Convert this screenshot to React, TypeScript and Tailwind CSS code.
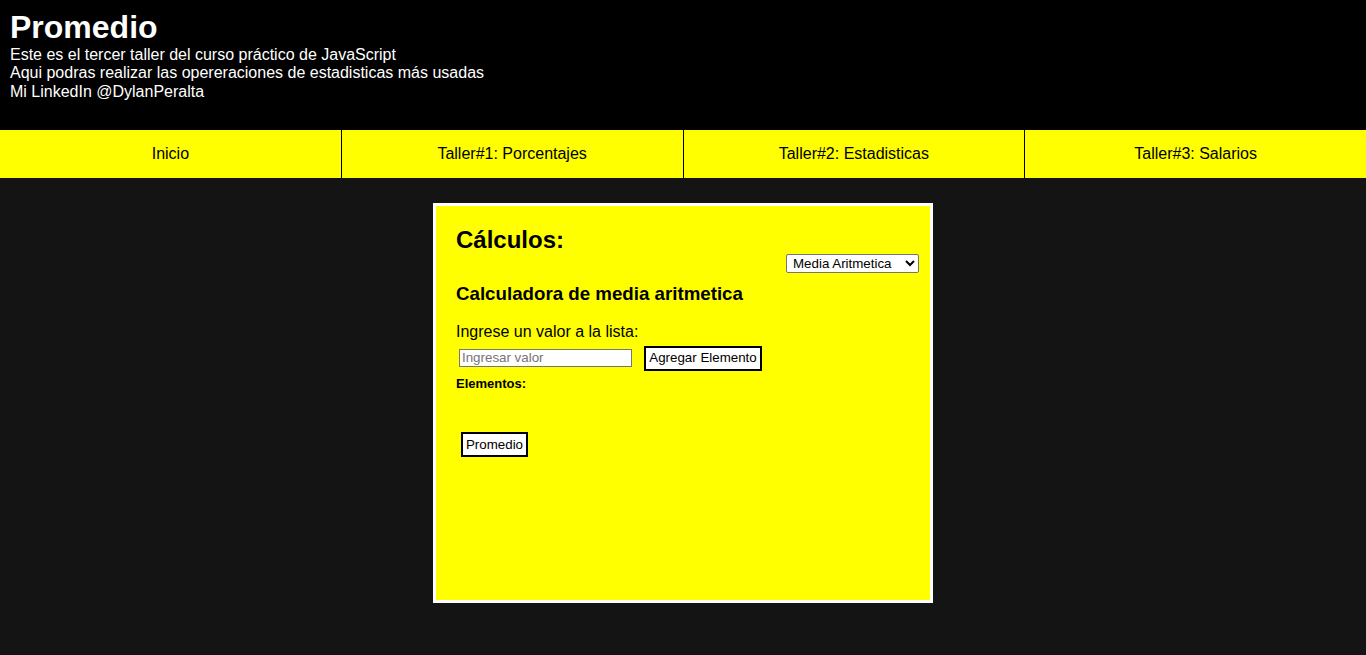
import React from "react";

const links = ["Inicio", "Taller#1: Porcentajes", "Taller#2: Estadisticas", "Taller#3: Salarios"];

export default function App() {
  return (
    <div className="min-h-screen bg-[#141414] font-['Liberation_Sans',Arial,sans-serif]">
      <header className="h-[130px] bg-black px-[10px] pt-[9px] text-white">
        <h1 className="text-[32px] font-bold leading-[37px]">Promedio</h1>
        <p className="text-[16px] leading-[18.4px]">Este es el tercer taller del curso práctico de JavaScript</p>
        <p className="text-[16px] leading-[18.4px]">Aqui podras realizar las opereraciones de estadisticas más usadas</p>
        <p className="text-[16px] leading-[18.4px]">Mi LinkedIn @DylanPeralta</p>
      </header>

      <nav className="flex h-[48px] bg-[#ffff00]">
        {links.map((l, i) => (
          <a
            key={l}
            href="#"
            className={
              "flex flex-1 items-center justify-center text-[16px] text-black " +
              (i < links.length - 1 ? "border-r border-black" : "")
            }
          >
            {l}
          </a>
        ))}
      </nav>

      <main className="flex justify-center pt-[25px]">
        <section className="h-[400px] w-[500px] border-[3px] border-white bg-[#ffff00] px-[20px] pt-[20px] text-black">
          <h2 className="text-[24px] font-bold leading-[27.6px]">Cálculos:</h2>
          <div className="-mr-[9px] flex justify-end">
            <select className="h-[19px] w-[133px] rounded-[2px] border border-[#767676] bg-white pl-[2px] text-[13.33px] text-black">
              <option>Media Aritmetica</option>
              <option>Mediana</option>
              <option>Moda</option>
            </select>
          </div>
          <h3 className="mt-[10px] text-[18.72px] font-bold leading-[21.5px]">Calculadora de media aritmetica</h3>
          <p className="mt-[19px] text-[16px] leading-[18.4px]">Ingrese un valor a la lista:</p>
          <div className="mt-[4px] flex items-center">
            <input
              type="text"
              placeholder="Ingresar valor"
              className="ml-[3px] h-[18px] w-[173px] border border-[#767676] bg-white px-[2px] text-[13.33px] placeholder:text-[#757575]"
            />
            <button className="ml-[12px] h-[25px] w-[118px] border-2 border-black bg-white text-[13.33px] text-black">
              Agregar Elemento
            </button>
          </div>
          <p className="mt-[5px] text-[13px] font-bold leading-[15px]">Elementos:</p>
          <ul className="h-[41px]"></ul>
          <button className="ml-[5px] h-[25px] w-[67px] border-2 border-black bg-white text-[13.33px] text-black">
            Promedio
          </button>
        </section>
      </main>
    </div>
  );
}
